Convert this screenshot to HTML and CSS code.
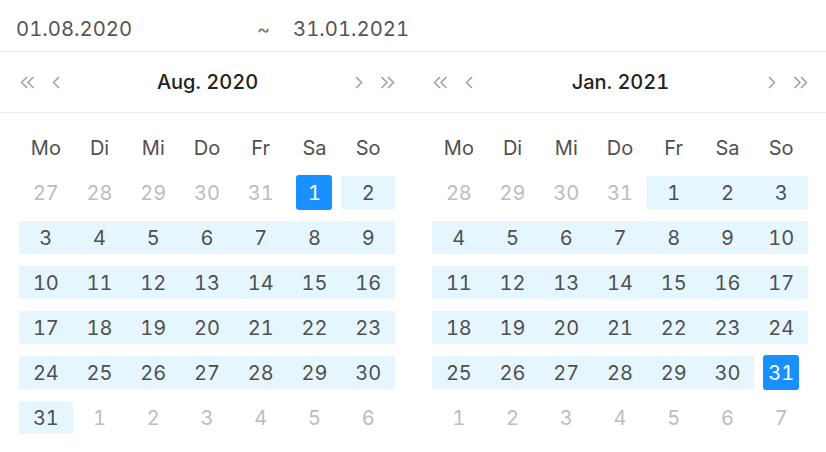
FILE: index.html
```html
<!DOCTYPE html>
<html lang="de">
<head>
    <meta charset="UTF-8">
    <meta name="viewport" content="width=device-width, initial-scale=1.0">
    <title>Zeitraum wählen</title>
    <link rel="stylesheet" href="styles.css">
</head>
<body>
    <div class="range-picker">
        <div class="range-input">
            <div class="input-value">01.08.2020</div>
            <div class="input-sep">~</div>
            <div class="input-value">31.01.2021</div>
        </div>

        <div class="panels">
            <!-- Linkes Panel -->
            <div class="panel">
                <div class="panel-header">
                    <button class="nav-btn super-prev">
                        <svg width="15" height="13" viewBox="0 0 15 13"><polyline points="7,1 1.5,6.5 7,12"/><polyline points="13.5,1 8,6.5 13.5,12"/></svg>
                    </button>
                    <button class="nav-btn prev">
                        <svg width="8" height="13" viewBox="0 0 8 13"><polyline points="7,1 1.5,6.5 7,12"/></svg>
                    </button>
                    <div class="panel-title">Aug. 2020</div>
                    <button class="nav-btn next">
                        <svg width="8" height="13" viewBox="0 0 8 13"><polyline points="1,1 6.5,6.5 1,12"/></svg>
                    </button>
                    <button class="nav-btn super-next">
                        <svg width="15" height="13" viewBox="0 0 15 13"><polyline points="1.5,1 7,6.5 1.5,12"/><polyline points="8,1 13.5,6.5 8,12"/></svg>
                    </button>
                </div>
                <div class="panel-body">
                    <div class="weekdays">
                        <div>Mo</div><div>Di</div><div>Mi</div><div>Do</div><div>Fr</div><div>Sa</div><div>So</div>
                    </div>
                    <div class="days">
                        <div class="cell out"><span>27</span></div>
                        <div class="cell out"><span>28</span></div>
                        <div class="cell out"><span>29</span></div>
                        <div class="cell out"><span>30</span></div>
                        <div class="cell out"><span>31</span></div>
                        <div class="cell selected"><span>1</span></div>
                        <div class="cell range"><span>2</span></div>

                        <div class="cell range"><span>3</span></div>
                        <div class="cell range"><span>4</span></div>
                        <div class="cell range"><span>5</span></div>
                        <div class="cell range"><span>6</span></div>
                        <div class="cell range"><span>7</span></div>
                        <div class="cell range"><span>8</span></div>
                        <div class="cell range"><span>9</span></div>

                        <div class="cell range"><span>10</span></div>
                        <div class="cell range"><span>11</span></div>
                        <div class="cell range"><span>12</span></div>
                        <div class="cell range"><span>13</span></div>
                        <div class="cell range"><span>14</span></div>
                        <div class="cell range"><span>15</span></div>
                        <div class="cell range"><span>16</span></div>

                        <div class="cell range"><span>17</span></div>
                        <div class="cell range"><span>18</span></div>
                        <div class="cell range"><span>19</span></div>
                        <div class="cell range"><span>20</span></div>
                        <div class="cell range"><span>21</span></div>
                        <div class="cell range"><span>22</span></div>
                        <div class="cell range"><span>23</span></div>

                        <div class="cell range"><span>24</span></div>
                        <div class="cell range"><span>25</span></div>
                        <div class="cell range"><span>26</span></div>
                        <div class="cell range"><span>27</span></div>
                        <div class="cell range"><span>28</span></div>
                        <div class="cell range"><span>29</span></div>
                        <div class="cell range"><span>30</span></div>

                        <div class="cell range"><span>31</span></div>
                        <div class="cell out"><span>1</span></div>
                        <div class="cell out"><span>2</span></div>
                        <div class="cell out"><span>3</span></div>
                        <div class="cell out"><span>4</span></div>
                        <div class="cell out"><span>5</span></div>
                        <div class="cell out"><span>6</span></div>
                    </div>
                </div>
            </div>

            <!-- Rechtes Panel -->
            <div class="panel">
                <div class="panel-header">
                    <button class="nav-btn super-prev">
                        <svg width="15" height="13" viewBox="0 0 15 13"><polyline points="7,1 1.5,6.5 7,12"/><polyline points="13.5,1 8,6.5 13.5,12"/></svg>
                    </button>
                    <button class="nav-btn prev">
                        <svg width="8" height="13" viewBox="0 0 8 13"><polyline points="7,1 1.5,6.5 7,12"/></svg>
                    </button>
                    <div class="panel-title">Jan. 2021</div>
                    <button class="nav-btn next">
                        <svg width="8" height="13" viewBox="0 0 8 13"><polyline points="1,1 6.5,6.5 1,12"/></svg>
                    </button>
                    <button class="nav-btn super-next">
                        <svg width="15" height="13" viewBox="0 0 15 13"><polyline points="1.5,1 7,6.5 1.5,12"/><polyline points="8,1 13.5,6.5 8,12"/></svg>
                    </button>
                </div>
                <div class="panel-body">
                    <div class="weekdays">
                        <div>Mo</div><div>Di</div><div>Mi</div><div>Do</div><div>Fr</div><div>Sa</div><div>So</div>
                    </div>
                    <div class="days">
                        <div class="cell out"><span>28</span></div>
                        <div class="cell out"><span>29</span></div>
                        <div class="cell out"><span>30</span></div>
                        <div class="cell out"><span>31</span></div>
                        <div class="cell range"><span>1</span></div>
                        <div class="cell range"><span>2</span></div>
                        <div class="cell range"><span>3</span></div>

                        <div class="cell range"><span>4</span></div>
                        <div class="cell range"><span>5</span></div>
                        <div class="cell range"><span>6</span></div>
                        <div class="cell range"><span>7</span></div>
                        <div class="cell range"><span>8</span></div>
                        <div class="cell range"><span>9</span></div>
                        <div class="cell range"><span>10</span></div>

                        <div class="cell range"><span>11</span></div>
                        <div class="cell range"><span>12</span></div>
                        <div class="cell range"><span>13</span></div>
                        <div class="cell range"><span>14</span></div>
                        <div class="cell range"><span>15</span></div>
                        <div class="cell range"><span>16</span></div>
                        <div class="cell range"><span>17</span></div>

                        <div class="cell range"><span>18</span></div>
                        <div class="cell range"><span>19</span></div>
                        <div class="cell range"><span>20</span></div>
                        <div class="cell range"><span>21</span></div>
                        <div class="cell range"><span>22</span></div>
                        <div class="cell range"><span>23</span></div>
                        <div class="cell range"><span>24</span></div>

                        <div class="cell range"><span>25</span></div>
                        <div class="cell range"><span>26</span></div>
                        <div class="cell range"><span>27</span></div>
                        <div class="cell range"><span>28</span></div>
                        <div class="cell range"><span>29</span></div>
                        <div class="cell range"><span>30</span></div>
                        <div class="cell selected"><span>31</span></div>

                        <div class="cell out"><span>1</span></div>
                        <div class="cell out"><span>2</span></div>
                        <div class="cell out"><span>3</span></div>
                        <div class="cell out"><span>4</span></div>
                        <div class="cell out"><span>5</span></div>
                        <div class="cell out"><span>6</span></div>
                        <div class="cell out"><span>7</span></div>
                    </div>
                </div>
            </div>
        </div>
    </div>
</body>
</html>
```

FILE: styles.css
```css
body {
    font-family: Inter, 'Liberation Sans', sans-serif;
    font-variant-numeric: tabular-nums;
    margin: 0;
    background-color: #fff;
    color: #505050;
}

.range-picker {
    width: 826px;
}

/* Eingabezeile oben */
.range-input {
    display: flex;
    align-items: center;
    height: 45px;
    padding: 6px 0 0 16px;
    border-bottom: 1px solid #ececec;
    font-size: 20.3px;
    color: #555;
}

.input-value:first-child {
    width: 241px;
}

.input-sep {
    width: 36px;
    color: #777;
}

.panels {
    display: flex;
}

.panel {
    width: 413px;
}

.panel-header {
    display: flex;
    align-items: center;
    height: 60px;
    padding: 0 18px 0 20px;
    border-bottom: 1px solid #ececec;
}

.panel-title {
    flex: 1;
    text-align: center;
    font-size: 20px;
    font-weight: 500;
    color: #222;
}

.nav-btn {
    display: flex;
    padding: 0;
    border: none;
    background: none;
    cursor: pointer;
}

.nav-btn svg {
    fill: none;
    stroke: #9e9e9e;
    stroke-width: 1.5;
}

.prev {
    margin-left: 17px;
}

.super-next {
    margin-left: 17px;
}

.panel-body {
    padding: 12px 18px 0 19px;
}

.weekdays,
.days {
    display: grid;
    grid-template-columns: repeat(7, 1fr);
    grid-auto-rows: 45px;
}

.weekdays div {
    display: flex;
    align-items: center;
    justify-content: center;
    font-size: 20px;
}

.cell {
    display: flex;
    align-items: center;
    justify-content: center;
    font-size: 20px;
}

.cell span {
    display: flex;
    align-items: center;
    justify-content: center;
    width: 36px;
    height: 35px;
    border-radius: 3px;
}

.cell.out {
    color: #bdbdbd;
}

.cell.range {
    height: 33px;
    align-self: center;
    background: #e6f6ff;
}

.cell.selected span {
    background: #1890ff;
    color: #fff;
}
```
